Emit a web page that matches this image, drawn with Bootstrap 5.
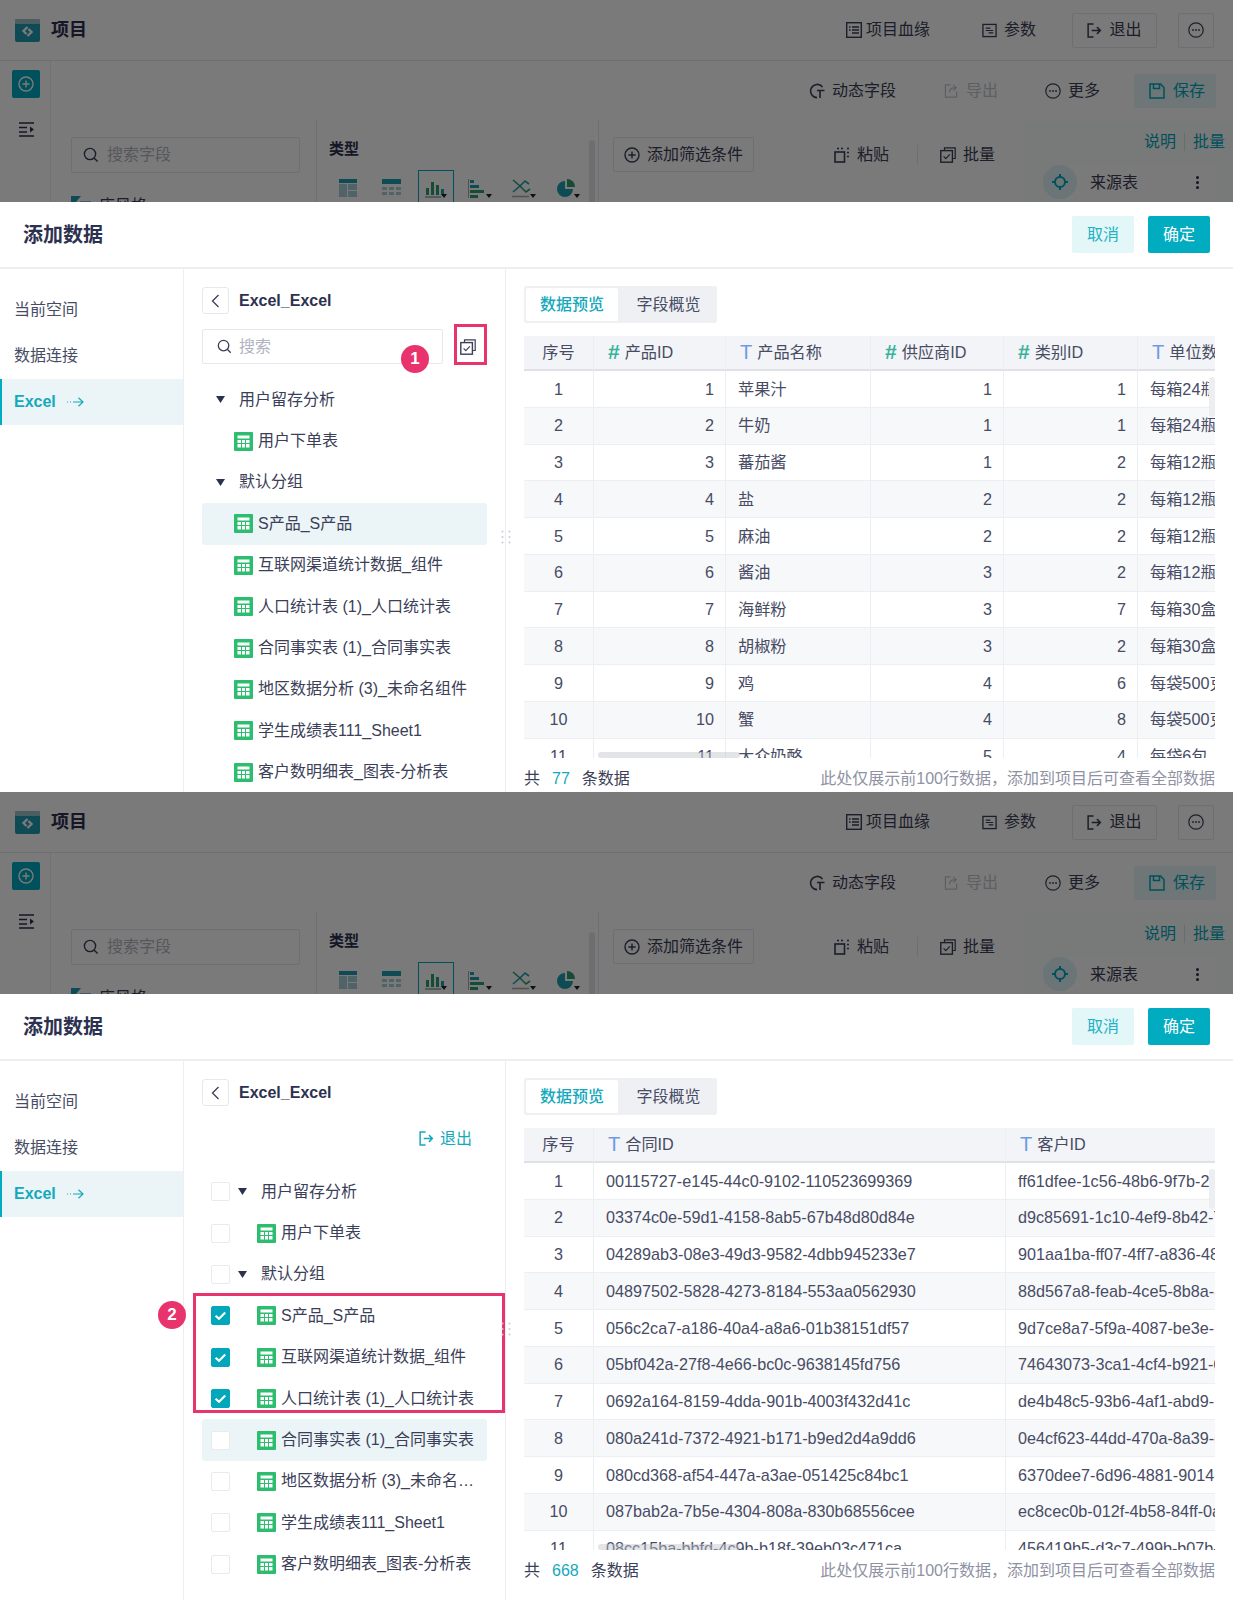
<!DOCTYPE html>
<html lang="zh">
<head>
  <meta charset="UTF-8" />
  <meta name="viewport" content="width=device-width, initial-scale=1.0"/>
  <title>添加数据</title>

  <link href="https://cdn.jsdelivr.net/npm/bootstrap@5.3.3/dist/css/bootstrap.min.css" rel="stylesheet">
  <script src="https://cdn.jsdelivr.net/npm/bootstrap@5.3.3/dist/js/bootstrap.bundle.min.js"></script>

  <style>
    body {
      font-family: "Liberation Sans", "Noto Sans CJK SC", sans-serif;
      font-size: 16px;
      color: #3b4058;
      background: #fff;
      overflow-x: hidden;
    }
    svg { flex: none; display: block; }

    .shot { position: relative; height: 792px; overflow: hidden; }
    .shot-tall { height: 808px; }

    /* dimmed page behind the drawer */
    .dim { position: relative; height: 202px; overflow: hidden; background: #fafbfc; }
    .dim::after { content: ""; position: absolute; inset: 0; background: rgba(0, 0, 0, .52); }
    .dim-top { height: 61px; padding: 0 19px 0 15px; background: #fff; border-bottom: 1px solid #e6e8ec; }
    .dim-title { margin-left: 11px; font-size: 18px; font-weight: 700; color: #2c3150; }
    .dim-rail { width: 52px; height: 141px; background: #fff; border-right: 1px solid #eceef2; padding: 9px 0 0 12px; }
    .rail-add { width: 28px; height: 28px; border-radius: 2px; background: #00a9bf; }
    .dim-tools { height: 59px; padding-right: 17px; background: #fff; }
    .dim-item { color: #3b4058; gap: 7px; white-space: nowrap; }
    .dim-off { color: #c4c7d0; }
    .dim-line { padding: 0 10px; height: 35px; border: 1px solid #e6e8ec; background: #fff; border-radius: 2px; white-space: nowrap; gap: 7px; }
    .dim-save { height: 34px; width: 82px; padding-left: 15px; gap: 8px; background: #e5f7f9; color: #00a9bf; border-radius: 2px; }
    .dim-fields { width: 266px; padding: 17px 0 0 20px; border-right: 1px solid #e6e8ec; background: #fff; }
    .dim-search { width: 229px; height: 36px; padding-left: 11px; gap: 8px; border: 1px solid #e6e8ec; border-radius: 2px; color: #b4b7c2; }
    .dim-check { position: relative; margin-top: 21px; gap: 8px; }
    .dim-types { width: 282px; padding: 17px 0 0 12px; border-right: 1px solid #e6e8ec; background: #fff; position: relative; }
    .dim-types b { color: #2c3150; font-size: 15px; line-height: 24px; display: block; }
    .type-row { margin-top: 9px; margin-left: -3px; }
    .type-cell { width: 44px; height: 34px; display: flex; justify-content: center; padding-top: 9px; }
    .type-on { width: 36px; margin: 0 4px; border: 1px solid #00a9bf; }
    .dim-thumb { position: absolute; right: 3px; top: 20px; width: 6px; height: 70px; background: #e4e6ea; border-radius: 3px; }
    .dim-filter { width: 426px; padding: 17px 30px 0 14px; background: #fff; }
    .dim-gap { width: 1px; height: 20px; background: #e6e8ec; margin: 0 22px 0 28px; }
    .dim-right { flex: 1; background: #fbfcfc; padding: 10px 8px 0 35px; }
    .dim-teal { color: #00a9bf; }
    .dim-src { position: relative; height: 35px; margin: 11px 10px 0 4px; padding-left: 26px; background: #fff; }
    .src-dot { position: absolute; left: -21px; top: 0; width: 34px; height: 34px; border-radius: 50%; background: #dff3f6; }
    .src-sep { width: 1px; height: 18px; background: #d5e6ea; align-self: center; }

    /* drawer */
    .dw-head { height: 67px; padding: 0 23px; border-bottom: 2px solid #eceef1; }
    .dw-title { font-size: 20px; font-weight: 700; color: #2c3150; }
    .btn-pale, .btn-solid { width: 62px; height: 37px; padding: 0; border: 0; border-radius: 2px; font-size: 16px; }
    .btn-pale { background: #e3f6f8; color: #1fb1c4; }
    .btn-solid { background: #02acc0; color: #fff; margin-left: 14px; }
    .dw-body { height: 523px; }
    .shot-tall .dw-body { height: 539px; }
    .dw-side { width: 184px; padding-top: 18px; border-right: 1px solid #eceef1; }
    .side-item { height: 46px; padding-left: 14px; color: #474c64; }
    .side-on { border-left: 2px solid #02acc0; padding-left: 12px; background: #ebf4f7; color: #15a9bc; font-weight: 700; gap: 11px; }
    .dw-tree { position: relative; width: 322px; padding: 18px 18px 0; border-right: 1px solid #eceef1; }
    .back-btn { width: 27px; height: 27px; border: 1px solid #e6e8ec; border-radius: 3px; }
    .tree-name { margin-left: 10px; font-weight: 700; color: #2c3150; }
    .tree-bar { height: 35px; margin: 15px 0; }
    .tree-search { width: 241px; height: 35px; padding-left: 14px; gap: 7px; border: 1px solid #e6e8ec; border-radius: 2px; color: #b0b3bf; }
    .tree-batch { margin-left: 17px; }
    .tree-quit { justify-content: flex-end; padding-right: 15px; gap: 6px; color: #15a9bc; }
    .tree-row { height: 41.4px; white-space: nowrap; border-radius: 3px; }
    .tree-row-on { background: #ebf4f7; }
    .tree-box { width: 19px; height: 19px; margin: 0 8px 0 9px; border: 1px solid #e8eaee; border-radius: 2px; background: #fff; }
    .tree-box-on { border-color: #02a7bb; background: #02a7bb; }
    .tree-arrow { margin-left: 14px; margin-right: 14px; }
    .has-box .tree-arrow { margin-left: 0; }
    .leaf-icon { margin-left: 32px; margin-right: 5px; }
    .has-box .leaf-icon { margin-left: 19px; }
    .leaf-cut { display: block; max-width: 225px; overflow: hidden; text-overflow: ellipsis; }
    .has-box .leaf-cut { max-width: 195px; }
    .mark-frame { position: absolute; border: 3px solid #e8336d; }
    .mark-dot { position: absolute; width: 28px; height: 28px; border-radius: 50%; background: #e8336d; color: #fff; font-size: 17px; font-weight: 700; display: flex; align-items: center; justify-content: center; }
    .drag-dots { position: absolute; right: -6px; top: 261px; z-index: 2; }

    .dw-main { flex: 1; min-width: 0; padding: 17px 18px 0; }
    .tab-set { display: inline-flex; padding: 2px; height: 37px; background: #eff0f4; border-radius: 2px; margin-bottom: 13px; vertical-align: top; }
    .tab-pick { width: 97px; padding-left: 4px; display: flex; align-items: center; justify-content: center; color: #474c64; }
    .tab-on { width: 92px; padding-left: 0; background: #fff; color: #15a9bc; font-weight: 500; border-radius: 2px; }
    .prev-wrap { position: relative; height: 422px; overflow: hidden; }
    .prev-table { table-layout: fixed; margin: 0; border-collapse: separate; border-spacing: 0; color: #474c64; font-size: 16.2px; }
    .prev-table th, .prev-table td { height: 36.75px; padding: 0 12px; vertical-align: middle; white-space: nowrap; overflow: hidden; border-width: 0 0 1px 1px; border-style: solid; border-color: #eceef1; color: #474c64; font-weight: 400; }
    .prev-table th { height: 35px; background: #f3f4f7; border-bottom: 2px solid #dfe1e7; padding-left: 14px; }
    .prev-table td.text-end { padding-right: 11px; }
    .prev-table tbody tr:nth-child(even) td { background: #f7f8fa; }
    .prev-table .no-cell { text-align: center; padding: 0; border-left: 0; }
    .type-t, .type-n { font-size: 20px; line-height: 1; margin-right: 5px; vertical-align: -1px; font-weight: 400; }
    .type-t { color: #6d9be0; }
    .type-n { color: #36b39a; font-size: 21px; font-weight: 700; }
    .bar-v { position: absolute; right: 0; top: 41px; width: 6px; height: 40px; background: #eceef1; border-radius: 3px; }
    .bar-h { position: absolute; left: 74px; bottom: 0; width: 142px; height: 6px; background: rgba(190, 195, 202, .45); border-radius: 3px; }
    .prev-foot { margin-top: 10px; line-height: 22px; white-space: nowrap; }
    .foot-num { color: #15a9bc; margin: 0 12px 0 12px; }
    .foot-note { color: #8f92a3; }
  </style>
</head>
<body>

  <!-- shared icons -->
  <svg width="0" height="0" style="position:absolute">
    <symbol id="i-sheet" viewBox="0 0 19 19"><rect width="19" height="19" rx="1" fill="#2dbd6e"/><path fill="#fff" d="M3.500 3.500h12v3h-12zM3.500 8h3.500v3H3.500zM8 8h3v3H8zM12 8h3.500v3H12zM3.500 12h3.500v3.500H3.500zM8 12h3v3.500H8zM12 12h3.500v3.500H12z"/></symbol>
    <symbol id="i-search" viewBox="0 0 16 16"><circle cx="7" cy="7" r="5.600" fill="none" stroke="currentColor" stroke-width="1.400"/><path d="M11 11l3.600 3.600" stroke="currentColor" stroke-width="1.400"/></symbol>
    <symbol id="i-batch" viewBox="0 0 16 16"><path d="M4.500 3V.8h10.700v10.700H13" fill="none" stroke="currentColor" stroke-width="1.200"/><rect x=".8" y="3.600" width="11.600" height="11.600" fill="none" stroke="currentColor" stroke-width="1.400"/><path d="M3.600 9.400l2.200 2.200 4-4.200" fill="none" stroke="currentColor" stroke-width="1.200"/></symbol>
    <symbol id="i-exit" viewBox="0 0 16 16"><path d="M7 1H1.200v14H7" fill="none" stroke="currentColor" stroke-width="1.600"/><path d="M5 8h9M10.600 4.400L14.200 8l-3.600 3.600" fill="none" stroke="currentColor" stroke-width="1.600"/></symbol>
    <symbol id="i-more" viewBox="0 0 16 16"><circle cx="8" cy="8" r="7.200" fill="none" stroke="currentColor" stroke-width="1.200"/><circle cx="5" cy="8" r=".9" fill="currentColor"/><circle cx="8" cy="8" r=".9" fill="currentColor"/><circle cx="11" cy="8" r=".9" fill="currentColor"/></symbol>
    <symbol id="i-plus" viewBox="0 0 16 16"><circle cx="8" cy="8" r="7" fill="none" stroke="currentColor" stroke-width="1.400"/><path d="M8 4.400v7.200M4.400 8h7.200" stroke="currentColor" stroke-width="1.400"/></symbol>
    <symbol id="i-lineage" viewBox="0 0 16 16"><rect x=".7" y=".7" width="14.600" height="14.600" fill="none" stroke="currentColor" stroke-width="1.400"/><path d="M6 5h7M6 8h7M6 11h7M3 5h1.500M3 8h1.500" stroke="currentColor" stroke-width="1.300"/></symbol>
    <symbol id="i-param" viewBox="0 0 16 16"><rect x="1" y="1.500" width="14" height="13" fill="none" stroke="currentColor" stroke-width="1.400"/><path d="M4 5.500h5M4 8h8M7 10.500h5" stroke="currentColor" stroke-width="1.300"/></symbol>
    <symbol id="i-dyn" viewBox="0 0 16 16"><path d="M13.500 4A6.600 6.600 0 1 0 8 14.600" fill="none" stroke="currentColor" stroke-width="1.600"/><path d="M8 7.500h7.500M11 7.500V15" stroke="currentColor" stroke-width="1.600"/></symbol>
    <symbol id="i-export" viewBox="0 0 16 16"><path d="M7 2H1.500v13h12V9" fill="none" stroke="currentColor" stroke-width="1.300"/><path d="M6 10c0-3 2-5 6-5M10 2l3 3-3 3" fill="none" stroke="currentColor" stroke-width="1.300"/></symbol>
    <symbol id="i-save" viewBox="0 0 16 16"><path d="M1 1h10.500L15 4.500V15H1z" fill="none" stroke="currentColor" stroke-width="1.500"/><path d="M4.500 1v4.600h6V1" fill="none" stroke="currentColor" stroke-width="1.500"/></symbol>
    <symbol id="i-paste" viewBox="0 0 16 16"><rect x="1" y="5" width="9.500" height="10" fill="none" stroke="currentColor" stroke-width="1.600"/><path d="M3 1.500h2M7 1.500h2M13 1.500h2M13 5.500h2M13 9.500h2" stroke="currentColor" stroke-width="1.600"/></symbol>
    <symbol id="i-arrow" viewBox="0 0 9 7"><path d="M0 0h9L4.500 7z" fill="currentColor"/></symbol>
    <symbol id="i-tick" viewBox="0 0 19 19"><path d="M4 9.800l3.800 3.400 7-7" fill="none" stroke="#fff" stroke-width="2.400"/></symbol>
  </svg>

  <div class="shot" id="shotOne"></div>
  <div class="shot shot-tall" id="shotTwo"></div>

  <script>
    const dimHtml = `
      <div class="dim">
        <div class="dim-top d-flex align-items-center">
          <svg width="25" height="24" viewBox="0 0 25 24"><rect y="1" width="25" height="23" rx="2" fill="#1f9db2"/><rect y="1" width="25" height="5" rx="1" fill="#9fc4cc"/><path d="M12.500 9l-4 4 3 3M12.500 18l4-4-3-3" fill="none" stroke="#fff" stroke-width="2.400"/></svg>
          <span class="dim-title">项目</span>
          <div class="d-flex align-items-center ms-auto">
            <span class="dim-item d-flex align-items-center gap-1"><svg width="16" height="16"><use href="#i-lineage"/></svg>项目血缘</span>
            <span class="dim-item d-flex align-items-center ms-5 ps-1"><svg width="15" height="15"><use href="#i-param"/></svg>参数</span>
            <span class="dim-line d-flex align-items-center justify-content-center" style="margin-left:36px;width:85px"><svg width="15" height="15"><use href="#i-exit"/></svg>退出</span>
            <span class="dim-line d-flex align-items-center justify-content-center" style="margin-left:21px;width:36px;padding:0"><svg width="16" height="16"><use href="#i-more"/></svg></span>
          </div>
        </div>
        <div class="d-flex">
          <div class="dim-rail">
            <div class="rail-add d-flex align-items-center justify-content-center text-white"><svg width="16" height="16"><use href="#i-plus"/></svg></div>
            <svg class="mt-4" width="15" height="15" viewBox="0 0 15 15" style="margin-left:7px"><path d="M0 1h15M0 5.500h8M0 10h8M0 14h15" stroke="#2c3150" stroke-width="1.600"/><path d="M11 4.500l4 3-4 3z" fill="#2c3150"/></svg>
          </div>
          <div class="flex-grow-1">
            <div class="dim-tools d-flex align-items-center justify-content-end">
              <span class="dim-item d-flex align-items-center"><svg width="16" height="16"><use href="#i-dyn"/></svg>动态字段</span>
              <span class="dim-item dim-off d-flex align-items-center" style="margin-left:48px"><svg width="15" height="15"><use href="#i-export"/></svg>导出</span>
              <span class="dim-item d-flex align-items-center" style="margin-left:47px"><svg width="16" height="16"><use href="#i-more"/></svg>更多</span>
              <span class="dim-save d-flex align-items-center" style="margin-left:34px"><svg width="16" height="16"><use href="#i-save"/></svg>保存</span>
            </div>
            <div class="d-flex">
              <div class="dim-fields">
                <div class="dim-search d-flex align-items-center"><svg width="16" height="16" style="color:#3b4058"><use href="#i-search"/></svg>搜索字段</div>
                <div class="dim-check d-flex align-items-center"><svg width="20" height="20" viewBox="0 0 20 20"><path d="M0 0h10L0 12z" fill="#1f9db2"/><path d="M9 6h11M14.500 6v14" stroke="#6d9be0" stroke-width="1.500"/></svg>店风格</div>
              </div>
              <div class="dim-types">
                <b>类型</b>
                <div class="type-row d-flex">
                  <div class="type-cell"><svg width="18" height="18" viewBox="0 0 18 18"><path fill="#1f9db2" d="M0 0h18v4H0z"/><path fill="#a8d2d9" d="M0 5h8v13H0zM9 5h9v6H9zM9 12h9v6H9z"/></svg></div>
                  <div class="type-cell"><svg width="19" height="18" viewBox="0 0 19 18"><path fill="#1f9db2" d="M0 0h19v5H0z"/><path fill="#a8d2d9" d="M0 8h5v3H0zM7 8h5v3H7zM14 8h5v3h-5zM0 13h5v3H0zM7 13h5v3H7zM14 13h5v3h-5z"/></svg></div>
                  <div class="type-cell type-on"><svg width="22" height="18" viewBox="0 0 22 18"><path fill="#2e9e72" d="M1 8h3v7H1zM6 2h3v13H6zM11 5h3v10h-3z"/><path fill="#1f9db2" d="M16 9h3v6h-3z"/><path d="M0 17h16" stroke="#8aa" stroke-width="1.500"/><path d="M16 14h6l-3 4z" fill="#222"/></svg></div>
                  <div class="type-cell"><svg width="24" height="20" viewBox="0 0 24 20"><path d="M.5 0v19" stroke="#aaa"/><path fill="#1f9db2" d="M2 1h4v3H2zM2 6h9v3H2z"/><path fill="#2e9e72" d="M2 11h14v3H2zM2 16h8v3H2z"/><path d="M18 15h6l-3 4z" fill="#222"/></svg></div>
                  <div class="type-cell"><svg width="24" height="20" viewBox="0 0 24 20"><path d="M1 1l7 6 6 6 4-3" fill="none" stroke="#2e9e72" stroke-width="1.600"/><path d="M1 13l7-6 5-5 4 3" fill="none" stroke="#1f9db2" stroke-width="1.600"/><path d="M0 17.500h17" stroke="#aaa" stroke-width="1.500"/><path d="M18 15h6l-3 4z" fill="#222"/></svg></div>
                  <div class="type-cell"><svg width="24" height="20" viewBox="0 0 24 20"><path d="M9 2a8 8 0 1 0 8 8H9z" fill="#1f9db2"/><path d="M11 0a8 8 0 0 1 8 8h-8z" fill="#2e9e72"/><path d="M18 15h6l-3 4z" fill="#222"/></svg></div>
                </div>
                <div class="dim-thumb"></div>
              </div>
              <div class="dim-filter d-flex align-items-start">
                <span class="dim-line d-flex align-items-center"><svg width="16" height="16"><use href="#i-plus"/></svg>添加筛选条件</span>
                <div class="d-flex align-items-center ms-auto" style="height:35px">
                  <span class="dim-item d-flex align-items-center"><svg width="16" height="16"><use href="#i-paste"/></svg>粘贴</span>
                  <span class="dim-gap"></span>
                  <span class="dim-item d-flex align-items-center"><svg width="16" height="16"><use href="#i-batch"/></svg>批量</span>
                </div>
              </div>
              <div class="dim-right">
                <div class="d-flex justify-content-end gap-2 dim-teal" style="padding-left:84px;white-space:nowrap"><span>说明</span><span class="src-sep"></span><span>批量</span></div>
                <div class="dim-src d-flex align-items-center justify-content-between">
                  <div class="src-dot d-flex align-items-center justify-content-center dim-teal"><svg width="16" height="16" viewBox="0 0 16 16"><circle cx="8" cy="8" r="5" fill="none" stroke="currentColor" stroke-width="2"/><path d="M8 0v3M8 13v3M0 8h3M13 8h3" stroke="currentColor" stroke-width="2"/></svg></div>
                  <span>来源表</span>
                  <svg class="me-3" width="3" height="13" viewBox="0 0 3 13"><circle cx="1.500" cy="1.500" r="1.500" fill="#2c3150"/><circle cx="1.500" cy="6.500" r="1.500" fill="#2c3150"/><circle cx="1.500" cy="11.500" r="1.500" fill="#2c3150"/></svg>
                </div>
              </div>
            </div>
          </div>
        </div>
      </div>`;

    const treeItems = [
      { group: true, name: '用户留存分析' },
      { name: '用户下单表' },
      { group: true, name: '默认分组' },
      { name: 'S产品_S产品' },
      { name: '互联网渠道统计数据_组件' },
      { name: '人口统计表 (1)_人口统计表' },
      { name: '合同事实表 (1)_合同事实表' },
      { name: '地区数据分析 (3)_未命名组件' },
      { name: '学生成绩表111_Sheet1' },
      { name: '客户数明细表_图表-分析表' }
    ];

    const dragDots = `<svg class="drag-dots" width="10" height="14" viewBox="0 0 10 14" fill="#c9ccd4"><circle cx="1.500" cy="1.500" r="1"/><circle cx="8.500" cy="1.500" r="1"/><circle cx="1.500" cy="7" r="1"/><circle cx="8.500" cy="7" r="1"/><circle cx="1.500" cy="12.500" r="1"/><circle cx="8.500" cy="12.500" r="1"/></svg>`;

    function treeRows(opts) {
      return treeItems.map((item, i) => {
        const on = opts.activeRow === i ? ' tree-row-on' : '';
        const checked = opts.checked && opts.checked.includes(i);
        const box = opts.boxes ? `<span class="tree-box d-flex${checked ? ' tree-box-on' : ''}">${checked ? '<svg width="17" height="17"><use href="#i-tick"/></svg>' : ''}</span>` : '';
        const icon = item.group
          ? '<svg class="tree-arrow" width="9" height="7" style="color:#2c3150"><use href="#i-arrow"/></svg>'
          : '<svg class="leaf-icon" width="19" height="19"><use href="#i-sheet"/></svg>';
        return `<div class="tree-row d-flex align-items-center${on}${opts.boxes ? ' has-box' : ''}">${box}${icon}<span class="leaf-cut">${item.name}</span></div>`;
      }).join('');
    }

    function previewTable(data) {
      const cols = data.widths.map(w => `<col style="width:${w}px">`).join('');
      const head = data.head.map(h => {
        if (!h.type) return `<th class="no-cell">${h.name}</th>`;
        const cls = h.type === '#' ? 'type-n' : 'type-t';
        return `<th><span class="${cls}">${h.type}</span>${h.name}</th>`;
      }).join('');
      const body = data.rows.map((row, r) => {
        const cells = row.map(v => {
          const right = typeof v === 'number' ? ' class="text-end"' : '';
          return `<td${right}>${v}</td>`;
        }).join('');
        return `<tr><td class="no-cell">${r + 1}</td>${cells}</tr>`;
      }).join('');
      const total = data.widths.reduce((a, b) => a + b, 0);
      return `<table class="table prev-table" style="width:${total}px"><colgroup>${cols}</colgroup><thead><tr>${head}</tr></thead><tbody>${body}</tbody></table>`;
    }

    function drawShot(el, opts) {
      el.innerHTML = dimHtml + `
        <div class="dw-head d-flex align-items-center justify-content-between">
          <span class="dw-title">添加数据</span>
          <div class="d-flex"><button class="btn btn-pale">取消</button><button class="btn btn-solid">确定</button></div>
        </div>
        <div class="dw-body d-flex">
          <div class="dw-side">
            <div class="side-item d-flex align-items-center">当前空间</div>
            <div class="side-item d-flex align-items-center">数据连接</div>
            <div class="side-item side-on d-flex align-items-center">Excel
              <svg width="17" height="10" viewBox="0 0 17 10" fill="none" stroke="#15a9bc" stroke-width="1.200"><path d="M0 5h1M3 5h1M6 5h10M11.500 .8L16 5l-4.500 4.200"/></svg>
            </div>
          </div>
          <div class="dw-tree">
            <div class="d-flex align-items-center">
              <span class="back-btn d-flex align-items-center justify-content-center"><svg width="9" height="14" viewBox="0 0 9 14"><path d="M7.500 1L1.500 7l6 6" fill="none" stroke="#3b4058" stroke-width="1.300"/></svg></span>
              <span class="tree-name">Excel_Excel</span>
            </div>
            ${opts.boxes
              ? `<div class="tree-bar tree-quit d-flex align-items-center"><svg width="15" height="15"><use href="#i-exit"/></svg>退出</div>`
              : `<div class="tree-bar d-flex align-items-center">
                   <div class="tree-search d-flex align-items-center"><svg width="15" height="15" style="color:#3b4058"><use href="#i-search"/></svg>搜索</div>
                   <span class="tree-batch"><svg width="16" height="16" style="color:#3b4058"><use href="#i-batch"/></svg></span>
                 </div>`}
            ${treeRows(opts)}
            ${dragDots}
            ${opts.marks}
          </div>
          <div class="dw-main">
            <div class="tab-set"><span class="tab-pick tab-on">数据预览</span><span class="tab-pick">字段概览</span></div>
            <div class="prev-wrap">
              ${previewTable(opts.table)}
              <div class="bar-v"></div>
              <div class="bar-h"></div>
            </div>
            <div class="prev-foot d-flex justify-content-between">
              <span>共<span class="foot-num">${opts.total}</span>条数据</span>
              <span class="foot-note">此处仅展示前100行数据&#xFF0C;添加到项目后可查看全部数据</span>
            </div>
          </div>
        </div>`;
    }

    const productTable = {
      widths: [69, 132, 145, 133, 134, 150],
      head: [
        { name: '序号' }, { type: '#', name: '产品ID' }, { type: 'T', name: '产品名称' },
        { type: '#', name: '供应商ID' }, { type: '#', name: '类别ID' }, { type: 'T', name: '单位数量' }
      ],
      rows: [
        [1, '苹果汁', 1, 1, '每箱24瓶'],
        [2, '牛奶', 1, 1, '每箱24瓶'],
        [3, '蕃茄酱', 1, 2, '每箱12瓶'],
        [4, '盐', 2, 2, '每箱12瓶'],
        [5, '麻油', 2, 2, '每箱12瓶'],
        [6, '酱油', 3, 2, '每箱12瓶'],
        [7, '海鲜粉', 3, 7, '每箱30盒'],
        [8, '胡椒粉', 3, 2, '每箱30盒'],
        [9, '鸡', 4, 6, '每袋500克'],
        [10, '蟹', 4, 8, '每袋500克'],
        [11, '大众奶酪', 5, 4, '每袋6包']
      ]
    };

    const contractTable = {
      widths: [69, 412, 300],
      head: [{ name: '序号' }, { type: 'T', name: '合同ID' }, { type: 'T', name: '客户ID' }],
      rows: [
        ['00115727-e145-44c0-9102-110523699369', 'ff61dfee-1c56-48b6-9f7b-2a1c4d0e'],
        ['03374c0e-59d1-4158-8ab5-67b48d80d84e', 'd9c85691-1c10-4ef9-8b42-7f3e1a9b'],
        ['04289ab3-08e3-49d3-9582-4dbb945233e7', '901aa1ba-ff07-4ff7-a836-48d2c6e1'],
        ['04897502-5828-4273-8184-553aa0562930', '88d567a8-feab-4ce5-8b8a-3c71e0d5'],
        ['056c2ca7-a186-40a4-a8a6-01b38151df57', '9d7ce8a7-5f9a-4087-be3e-5a02b7c4'],
        ['05bf042a-27f8-4e66-bc0c-9638145fd756', '74643073-3ca1-4cf4-b921-6e8d1f30'],
        ['0692a164-8159-4dda-901b-4003f432d41c', 'de4b48c5-93b6-4af1-abd9-1b7c2e64'],
        ['080a241d-7372-4921-b171-b9ed2d4a9dd6', '0e4cf623-44dd-470a-8a39-c5f0a812'],
        ['080cd368-af54-447a-a3ae-051425c84bc1', '6370dee7-6d96-4881-9014-d2b3e679'],
        ['087bab2a-7b5e-4304-808a-830b68556cee', 'ec8cec0b-012f-4b58-84ff-0a9d6c13'],
        ['08cc15ba-bbfd-4c9b-b18f-39eb03c471ca', '456419b5-d3c7-499b-b07b-8e1f4a20']
      ]
    };

    drawShot(document.getElementById('shotOne'), {
      activeRow: 3,
      total: 77,
      table: productTable,
      marks: `<div class="mark-frame" style="left:270px;top:55px;width:33px;height:41px"></div>
              <div class="mark-dot" style="left:217px;top:76px">1</div>`
    });

    drawShot(document.getElementById('shotTwo'), {
      boxes: true,
      activeRow: 6,
      checked: [3, 4, 5],
      total: 668,
      table: contractTable,
      marks: `<div class="mark-frame" style="left:9px;top:232px;width:312px;height:120px"></div>
              <div class="mark-dot" style="left:-26px;top:240px">2</div>`
    });
  </script>

</body>
</html>
